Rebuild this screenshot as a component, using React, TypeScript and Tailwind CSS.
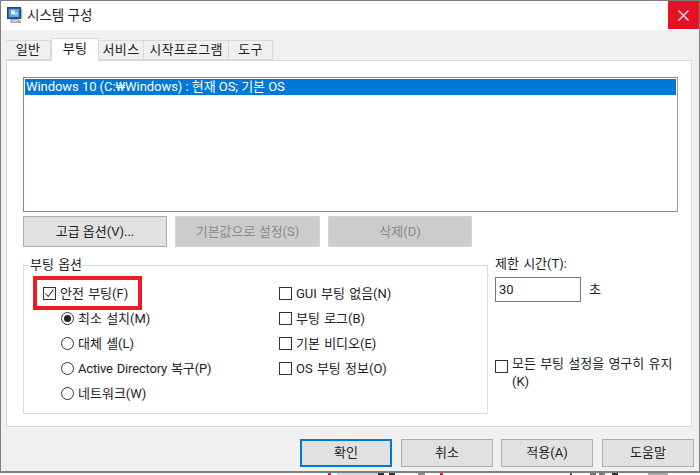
import React from "react";

const font = { fontFamily: 'Roboto, "Noto Sans CJK KR", "Noto Sans", sans-serif' };

function Tab({ label, active, w }: { label: string; active?: boolean; w: string }) {
  return active ? (
    <div className={`${w} h-[23px] -mb-px bg-white border border-b-0 border-[#d9d9d9] flex items-center justify-center text-[13px] tracking-[0.3px] text-[#111] z-10 pb-[2px]`}>
      {label}
    </div>
  ) : (
    <div className={`${w} h-[20px] bg-[#f0f0f0] border border-l-0 border-[#d9d9d9] flex items-center justify-center text-[13px] tracking-[0.3px] text-[#222]`}>
      {label}
    </div>
  );
}

function Btn({ label, disabled, w, primary }: { label: string; disabled?: boolean; w: string; primary?: boolean }) {
  const cls = disabled
    ? "bg-[#cccccc] border-[#d4d4d4] text-[#8a8a8a]"
    : primary
      ? "bg-[#e1e1e1] border-2 border-[#0078d7] text-[#222]"
      : "bg-[#e1e1e1] border-[#adadad] text-[#222]";
  return (
    <div className={`${w} h-full border ${cls} flex items-center justify-center text-[13px]`}>{label}</div>
  );
}

function Check({ checked }: { checked?: boolean }) {
  return (
    <span className="w-[13px] h-[13px] shrink-0 bg-white border border-[#333] flex items-center justify-center">
      {checked && (
        <svg width="11" height="11" viewBox="0 0 11 11" fill="none">
          <path d="M1.5 5.5 L4.2 8.5 L9.5 1.5" stroke="#333" strokeWidth="1.1" />
        </svg>
      )}
    </span>
  );
}

function Radio({ checked }: { checked?: boolean }) {
  return (
    <span className="w-[13px] h-[13px] shrink-0 bg-white rounded-full border border-[#333] flex items-center justify-center">
      {checked && <span className="w-[7px] h-[7px] rounded-full bg-[#222]" />}
    </span>
  );
}

function Row({ label, control, tight }: { label: string; control: React.ReactNode; tight?: boolean }) {
  return (
    <div className="h-[25px] flex items-center gap-[4px] text-[13px] [word-spacing:1px] text-[#222] whitespace-nowrap">
      {control}
      <span className={tight ? "tracking-[-0.18px]" : ""}>{label}</span>
    </div>
  );
}

export default function App() {
  return (
    <div className="relative w-[700px] h-[475px] overflow-hidden bg-white" style={font}>
      <div className="w-[700px] h-[473px] flex flex-col border border-b-2 border-[#7f7f7f] bg-[#f0f0f0]">
        {/* title bar */}
        <div className="h-[29px] shrink-0 bg-white flex items-center pl-[6px]">
          <svg width="16" height="17" viewBox="0 0 16 17" className="shrink-0">
            <rect x="0.5" y="0.5" width="13" height="11" fill="#2f5f9f" stroke="#24477a" />
            <rect x="2" y="2" width="10" height="8" fill="#5aa2e6" />
            <path d="M4 3.5 H8 V7.5 H4 Z" fill="#e6f2fc" />
            <path d="M8 5 H11 V8.5 H8 Z" fill="#9ccbf2" />
            <rect x="14" y="2" width="1.5" height="10" fill="#b9b9b9" />
            <path d="M3 12 H11 L14 14.5 V16 H4 Z" fill="#a8a8a8" />
            <path d="M5 13 H10 L11.5 14.5 H5 Z" fill="#dcdcdc" />
          </svg>
          <span className="ml-[4px] text-[13.5px] text-[#222]">시스템 구성</span>
          <div className="ml-auto self-start w-[31px] h-[28px] bg-[#e81123] flex items-center justify-center">
            <svg width="11" height="11" viewBox="0 0 11 11" fill="none">
              <path d="M0.5 0.5 L10.5 10.5 M10.5 0.5 L0.5 10.5" stroke="#fff" strokeWidth="1.1" />
            </svg>
          </div>
        </div>

        {/* tabs + panel */}
        <div className="flex-1 flex flex-col px-[5px] pt-[7px]">
          <div className="h-[23px] flex items-end">
            <Tab label="일반" w="w-[45px] border-l" />
            <Tab label="부팅" active w="w-[48px]" />
            <Tab label="서비스" w="w-[45px]" />
            <Tab label="시작프로그램" w="w-[85px]" />
            <Tab label="도구" w="w-[44px]" />
          </div>
          <div className="h-[367px] w-[686px] bg-white border border-[#d9d9d9] flex flex-col pt-[16px] pl-[16px]">
            {/* list */}
            <div className="w-[655px] h-[135px] border border-[#82878f] border-r-[#a0a0a0] p-[1px] bg-white">
              <div className="h-[16px] bg-[#0078d7] text-white text-[13px] tracking-[-0.05px] leading-[16px] pl-[1px] whitespace-nowrap">
                Windows 10 (C:₩Windows) : 현재 OS; 기본 OS
              </div>
            </div>

            {/* buttons */}
            <div className="h-[31px] mt-[4px] flex gap-[8px]">
              <Btn label="고급 옵션(V)..." w="w-[144px]" />
              <Btn label="기본값으로 설정(S)" w="w-[145px]" disabled />
              <Btn label="삭제(D)" w="w-[144px]" disabled />
            </div>

            <div className="flex mt-[16px]">
              {/* group */}
              <div className="relative w-[465px] h-[149px] border border-[#dcdcdc] mt-[2px] flex pt-[15px] pl-[19px]">
                <span className="absolute -top-[10px] left-[5px] bg-white px-px text-[13px] [word-spacing:1px] leading-[18px] text-[#222]">부팅 옵션</span>
                <div className="w-[236px]">
                  <Row label="안전 부팅(F)" control={<Check checked />} />
                  <div className="ml-[18px]">
                    <Row label="최소 설치(M)" control={<Radio checked />} />
                    <Row label="대체 셸(L)" control={<Radio />} />
                    <Row label="Active Directory 복구(P)" control={<Radio />} tight />
                    <Row label="네트워크(W)" control={<Radio />} />
                  </div>
                </div>
                <div>
                  <Row label="GUI 부팅 없음(N)" control={<Check />} />
                  <Row label="부팅 로그(B)" control={<Check />} />
                  <Row label="기본 비디오(E)" control={<Check />} />
                  <Row label="OS 부팅 정보(O)" control={<Check />} />
                </div>
                {/* annotation */}
                <div className="absolute left-[9px] top-[10px] w-[109px] h-[34px] border-[4px] border-[#ed1c24]" />
              </div>

              {/* timeout */}
              <div className="ml-[7px] flex flex-col -mt-[8px]">
                <span className="text-[13px] [word-spacing:1px] leading-[18px] text-[#222]">제한 시간(T):</span>
                <div className="flex items-center mt-[4px]">
                  <div className="w-[86px] h-[25px] border border-[#7a7a7a] bg-white text-[13px] leading-[23px] pl-[3px] text-[#222]">30</div>
                  <span className="ml-[8px] text-[13px] text-[#222]">초</span>
                </div>
                <div className="mt-[53px] flex gap-[4px]">
                  <span className="mt-[5px]"><Check /></span>
                  <span className="w-[172px] text-[13px] [word-spacing:1px] leading-[18px] text-[#222]">모든 부팅 설정을 영구히 유지 (K)</span>
                </div>
              </div>
            </div>
          </div>

          {/* bottom buttons */}
          <div className="h-[28px] mt-[12px] flex justify-end">
            <Btn label="확인" w="w-[92px]" primary />
            <div className="w-[9px]" />
            <Btn label="취소" w="w-[92px]" />
            <div className="w-[8px]" />
            <Btn label="적용(A)" w="w-[92px]" />
            <div className="w-[9px]" />
            <Btn label="도움말" w="w-[92px]" />
          </div>
        </div>
      </div>
      {/* fragments of the page behind the dialog */}
      <div className="h-[2px] flex pl-[328px]">
        <span className="w-[3px] bg-[#d02028]" />
        <span className="w-[41px] ml-[6px] bg-[#d8d8d8]" />
        <span className="w-[6px] bg-[#333]" />
        <span className="w-[6px] ml-[5px] bg-[#333]" />
        <span className="w-[7px] ml-[23px] bg-[#888]" />
        <span className="w-[3px] ml-[15px] bg-[#d02028]" />
        <span className="w-[2px] ml-[127px] bg-[#555]" />
        <span className="w-[6px] ml-[18px] bg-[#777]" />
        <span className="w-[6px] ml-[3px] bg-[#777]" />
        <span className="w-[6px] ml-[7px] bg-[#333]" />
        <span className="w-[20px] ml-[30px] bg-[#aaa]" />
      </div>
    </div>
  );
}
